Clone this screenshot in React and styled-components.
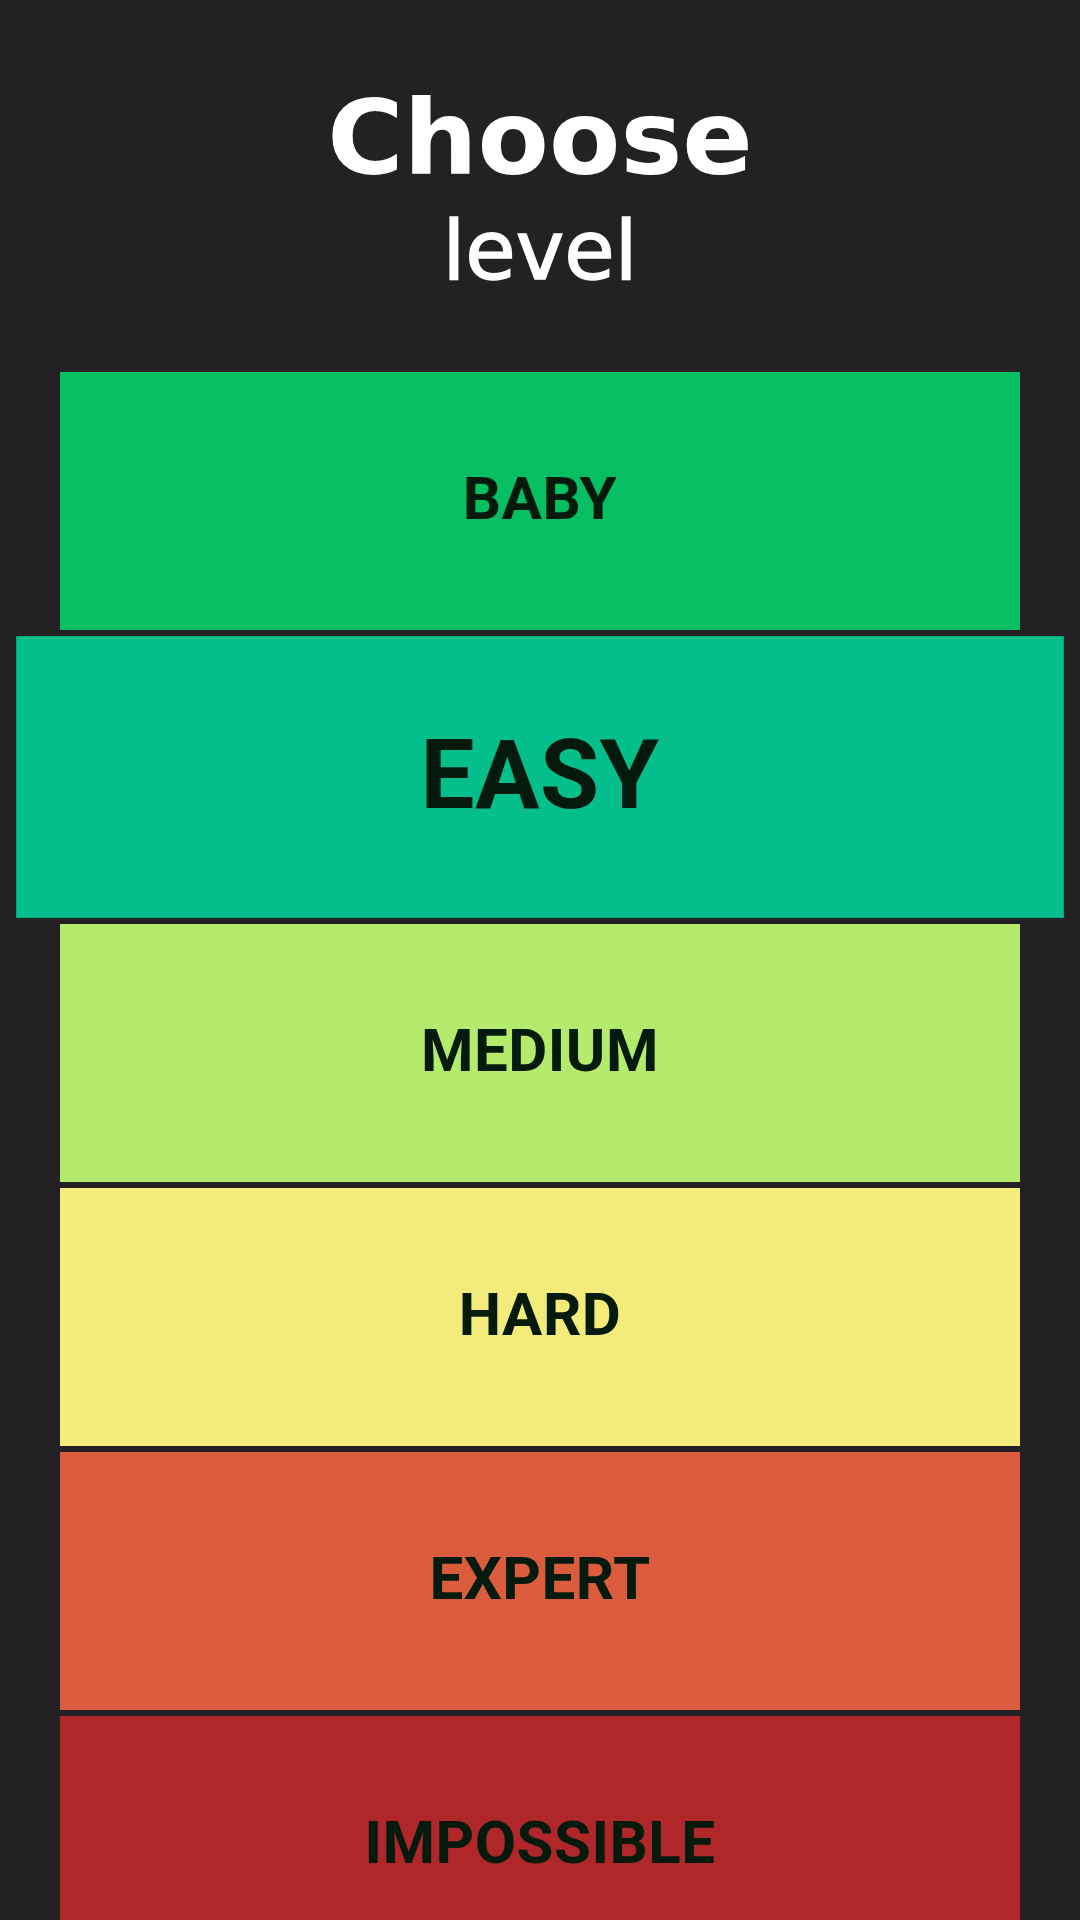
import React from 'react';
import styled, { createGlobalStyle } from 'styled-components';

const GlobalStyle = createGlobalStyle`
  html, body {
    margin: 0;
    padding: 0;
    background: #232124;
  }
  body {
    font-family: Roboto, "Liberation Sans", sans-serif;
  }
`;

const levels = [
  { name: 'BABY', color: '#06bf63' },
  { name: 'EASY', color: '#04bf8b', selected: true },
  { name: 'MEDIUM', color: '#b5eb6c' },
  { name: 'HARD', color: '#f3ec7a' },
  { name: 'EXPERT', color: '#db5c3c' },
  { name: 'IMPOSSIBLE', color: '#b0272a' },
];

const App = () => {
  return (
    <>
      <GlobalStyle />
      <Screen>
        <Header>
          <Title>Choose</Title>
          <Subtitle>level</Subtitle>
        </Header>
        <List>
          {levels.map((level) => (
            <LevelCard key={level.name} $color={level.color} $selected={level.selected}>
              <Label $selected={level.selected}>{level.name}</Label>
            </LevelCard>
          ))}
        </List>
      </Screen>
    </>
  );
};

export default App;

const Screen = styled.div`
  width: 1080px;
  height: 1920px;
  overflow: hidden;
  background: #232124;
  display: flex;
  flex-direction: column;
  align-items: center;
  padding-top: 86px;
  box-sizing: border-box;
`;

const Header = styled.header`
  display: flex;
  flex-direction: column;
  align-items: center;
  color: #ffffff;
  font-family: "DejaVu Sans", "Open Sans", sans-serif;
`;

const Title = styled.h1`
  margin: 0;
  font-size: 104px;
  line-height: 104px;
  font-weight: 700;
`;

const Subtitle = styled.h2`
  margin: 20px 0 0;
  font-size: 82px;
  line-height: 82px;
  font-weight: 400;
  -webkit-text-stroke: 1.5px #ffffff;
`;

const List = styled.div`
  margin-top: 80px;
  width: 960px;
  display: flex;
  flex-direction: column;
  gap: 6px;
`;

const LevelCard = styled.button`
  display: flex;
  align-items: center;
  justify-content: center;
  flex-shrink: 0;
  border: none;
  padding: 0 0 4px;
  cursor: pointer;
  background: ${(p) => p.$color};
  height: ${(p) => (p.$selected ? '282px' : '258px')};
  margin: ${(p) => (p.$selected ? '0 -44px' : '0')};
  box-shadow: ${(p) => (p.$selected ? 'inset 0 0 0 1px rgba(0,0,0,0.12)' : 'none')};
`;

const Label = styled.span`
  font-family: Roboto, "Liberation Sans", sans-serif;
  font-weight: 700;
  color: #041a0d;
  font-size: ${(p) => (p.$selected ? '96px' : '60px')};
  line-height: 1;
  letter-spacing: 0.5px;
`;
